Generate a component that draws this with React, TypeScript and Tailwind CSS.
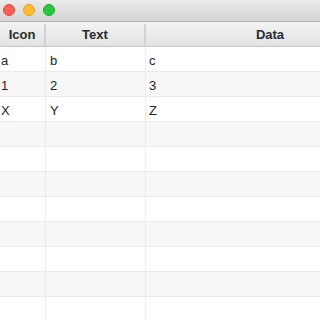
import React from 'react';

const rows = [
  ['a', 'b', 'c'],
  ['1', '2', '3'],
  ['X', 'Y', 'Z'],
  ['', '', ''],
  ['', '', ''],
  ['', '', ''],
  ['', '', ''],
  ['', '', ''],
  ['', '', ''],
  ['', '', ''],
  ['', '', ''],
];

const App = () => {
  return (
    <div className="w-[320px] h-[320px] overflow-hidden bg-white font-['Liberation_Sans',Arial,sans-serif] text-[13px] text-[#262626]">
      {/* Title bar */}
      <div className="h-[22px] flex items-center gap-[8px] pl-[3px] pb-[1px] bg-gradient-to-b from-[#ebebeb] to-[#d5d5d5] border-b border-[#b1b1b1]">
        <div className="w-[12px] h-[12px] rounded-full bg-[#fc5f57] border border-[#e2463f]" />
        <div className="w-[12px] h-[12px] rounded-full bg-[#fdbc2e] border border-[#e1a116]" />
        <div className="w-[12px] h-[12px] rounded-full bg-[#28c840] border border-[#14ae2b]" />
      </div>

      <div className="w-[394px]">
        {/* Header */}
        <div className="flex h-[25px] pt-[2px] bg-gradient-to-b from-[#f3f3f3] to-[#e3e3e3] border-b border-[#c8c8c8] font-bold text-[#2b2b2b]">
          <div className="w-[46px] flex items-center justify-center border-r-2 border-[#d2d2d2]">Icon</div>
          <div className="w-[100px] flex items-center justify-center border-r-2 border-[#d2d2d2]">Text</div>
          <div className="flex-1 flex items-center justify-center">Data</div>
        </div>

        {/* Rows */}
        {rows.map((row, i) => (
          <div
            key={i}
            className={`flex h-[25px] border-b border-[#ebebeb] ${i % 2 === 0 ? 'bg-white' : 'bg-[#f7f7f7]'}`}
          >
            <div className="w-[46px] flex items-center pt-[3px] pl-[1px] border-r border-[#ececec]">{row[0]}</div>
            <div className="w-[100px] flex items-center pt-[3px] pl-[4px] border-r border-[#ececec]">{row[1]}</div>
            <div className="flex-1 flex items-center pt-[3px] pl-[3px]">{row[2]}</div>
          </div>
        ))}
      </div>
    </div>
  );
};

export default App;
